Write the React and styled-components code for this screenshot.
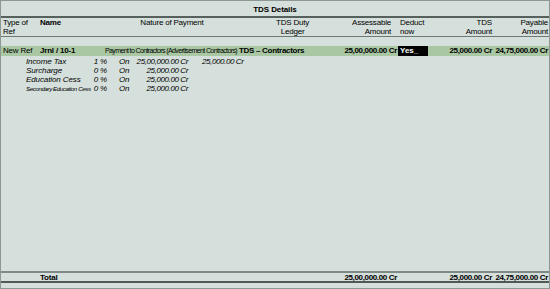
import React from 'react'
import styled, { createGlobalStyle } from 'styled-components'

const GlobalStyle = createGlobalStyle`
  html, body {
    margin: 0;
    padding: 0;
    background: #d5dfdb;
  }
  body {
    font-family: "Liberation Sans", Arial, sans-serif;
    font-size: 8px;
    color: #000;
  }
`

// column widths shared by header, voucher row and total row
const COLS = '38px 66px 134px 93px 66px 47px 47px 57px'

let Frame = styled.div`
  width: 550px;
  height: 289px;
  box-sizing: border-box;
  border: 1px solid #8d9793;
  display: flex;
  flex-direction: column;
  background: #d5dfdb;
  overflow: hidden;
`

let TitleBar = styled.div`
  height: 15px;
  line-height: 18px;
  text-align: center;
  font-weight: bold;
  font-size: 8px;
  letter-spacing: -0.1px;
  border-bottom: 2px solid #56605c;
`

let HeaderRow = styled.div`
  display: grid;
  grid-template-columns: ${COLS};
  height: 18px;
  line-height: 9px;
  border-bottom: 1px solid #6e7874;
`

let Cell = styled.div`
  white-space: nowrap;
  text-align: ${props => props.align || 'left'};
  padding-left: ${props => props.pl || 0}px;
  padding-right: ${props => props.pr || 0}px;
  font-weight: ${props => props.bold ? 'bold' : 'inherit'};
  letter-spacing: ${props => props.ls !== undefined ? props.ls : -0.2}px;
`

let Body = styled.div`
  flex: 1;
  padding-top: 9px;
`

let VoucherRow = styled.div`
  display: grid;
  grid-template-columns: ${COLS};
  height: 10px;
  line-height: 10px;
  background: #a8c7a2;
`

let Narrow = styled.span`
  font-size: 7px;
  letter-spacing: -0.62px;
`

let Cursor = styled.div`
  background: #000;
  color: #fff;
  font-weight: bold;
  width: 30px;
  height: 10px;
  padding-left: 2px;
  box-sizing: border-box;
  letter-spacing: 0;
`

let Duties = styled.div`
  padding-top: 1px;
`

let DutyRow = styled.div`
  display: grid;
  grid-template-columns: 25px 67px 14px 26px 55px 60px;
  height: 9px;
  line-height: 9px;
  font-style: italic;
  white-space: nowrap;
`

let DutyName = styled.span`
  font-size: ${props => props.small ? '6.2px' : '8px'};
  letter-spacing: ${props => props.small ? '-0.42px' : '-0.1px'};
`

let TotalRow = styled.div`
  display: grid;
  grid-template-columns: ${COLS};
  height: 8px;
  line-height: 9px;
  border-top: 2px solid #7f8985;
  border-bottom: 2px solid #4f5955;
  font-weight: bold;
`

let Footer = styled.div`
  height: 5px;
`

const duties = [
  { name: 'Income Tax', pct: '1 %', amount: '25,00,000.00 Cr', tax: '25,000.00 Cr' },
  { name: 'Surcharge', pct: '0 %', amount: '25,000.00 Cr' },
  { name: 'Education Cess', pct: '0 %', amount: '25,000.00 Cr' },
  { name: 'Secondary Education Cess', pct: '0 %', amount: '25,000.00 Cr', small: true }
]

export default function App() {
  return (
    <>
      <GlobalStyle />
      <Frame>
        <TitleBar>TDS Details</TitleBar>
        <HeaderRow>
          <Cell pl={2}>Type of<br />Ref</Cell>
          <Cell bold pl={1}>Name</Cell>
          <Cell align="center">Nature of Payment</Cell>
          <Cell align="center" pl={14}>TDS Duty<br />Ledger</Cell>
          <Cell align="right" pr={7}>Assessable<br />Amount</Cell>
          <Cell pl={2}>Deduct<br />now</Cell>
          <Cell align="right">TDS<br />Amount</Cell>
          <Cell align="right" pr={1}>Payable<br />Amount</Cell>
        </HeaderRow>
        <Body>
          <VoucherRow>
            <Cell pl={2}>New Ref</Cell>
            <Cell bold pl={1}>Jrnl / 10-1</Cell>
            <Cell><Narrow>Payment to Contractors (Advertisement Contractors)</Narrow></Cell>
            <Cell bold ls={-0.3}>TDS – Contractors</Cell>
            <Cell bold align="right" pr={1} ls={-0.35}>25,00,000.00 Cr</Cell>
            <Cell><Cursor>Yes_</Cursor></Cell>
            <Cell bold align="right" ls={-0.35}>25,000.00 Cr</Cell>
            <Cell bold align="right" pr={1} ls={-0.35}>24,75,000.00 Cr</Cell>
          </VoucherRow>
          <Duties>
            {duties.map(d => (
              <DutyRow key={d.name}>
                <span />
                <DutyName small={d.small}>{d.name}</DutyName>
                <Cell align="right">{d.pct}</Cell>
                <Cell pl={12}>On</Cell>
                <Cell align="right" ls={-0.4}>{d.amount}</Cell>
                <Cell pl={14} ls={-0.4}>{d.tax || ''}</Cell>
              </DutyRow>
            ))}
          </Duties>
        </Body>
        <TotalRow>
          <Cell />
          <Cell pl={1}>Total</Cell>
          <Cell />
          <Cell />
          <Cell align="right" pr={1} ls={-0.35}>25,00,000.00 Cr</Cell>
          <Cell />
          <Cell align="right" ls={-0.35}>25,000.00 Cr</Cell>
          <Cell align="right" pr={1} ls={-0.35}>24,75,000.00 Cr</Cell>
        </TotalRow>
        <Footer />
      </Frame>
    </>
  )
}
